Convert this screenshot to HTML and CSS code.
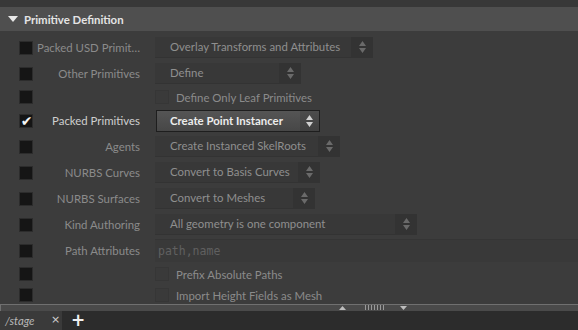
FILE: index.html
```html
<!DOCTYPE html>
<html>
<head>
<meta charset="utf-8">
<link rel="stylesheet" href="styles.css">
</head>
<body>
<div class="panel">
  <div class="topstrip"></div>
  <div class="header">
    <svg class="tri" width="10" height="6" viewBox="0 0 10 6"><path d="M0 0H10L5 6Z" fill="#e8e8e8"/></svg>
    <span class="htitle">Primitive Definition</span>
  </div>
  <div class="params">
    <div class="row">
      <span class="cb"></span><span class="label">Packed USD Primit…</span>
      <div class="menu w218"><span class="mtext">Overlay Transforms and Attributes</span><span class="arr"><svg width="7" height="12" viewBox="0 0 7 12"><path d="M3.5 0L7 5H0Z M0 7H7L3.5 12Z" fill="#6a6a6a"/></svg></span></div>
    </div>
    <div class="row">
      <span class="cb"></span><span class="label">Other Primitives</span>
      <div class="menu w146"><span class="mtext">Define</span><span class="arr"><svg width="7" height="12" viewBox="0 0 7 12"><path d="M3.5 0L7 5H0Z M0 7H7L3.5 12Z" fill="#6a6a6a"/></svg></span></div>
    </div>
    <div class="row toggle">
      <span class="cb"></span><span class="label"></span>
      <span class="tcb"></span><span class="ttext">Define Only Leaf Primitives</span>
    </div>
    <div class="row">
      <span class="cb"><span class="check">✔</span></span><span class="label on">Packed Primitives</span>
      <div class="menu active w164"><span class="mtext">Create Point Instancer</span><span class="arr"><svg width="7" height="12" viewBox="0 0 7 12"><path d="M3.5 0L7 5H0Z M0 7H7L3.5 12Z" fill="#d0d0d0"/></svg></span></div>
    </div>
    <div class="row">
      <span class="cb"></span><span class="label">Agents</span>
      <div class="menu w185"><span class="mtext">Create Instanced SkelRoots</span><span class="arr"><svg width="7" height="12" viewBox="0 0 7 12"><path d="M3.5 0L7 5H0Z M0 7H7L3.5 12Z" fill="#6a6a6a"/></svg></span></div>
    </div>
    <div class="row">
      <span class="cb"></span><span class="label">NURBS Curves</span>
      <div class="menu w165"><span class="mtext">Convert to Basis Curves</span><span class="arr"><svg width="7" height="12" viewBox="0 0 7 12"><path d="M3.5 0L7 5H0Z M0 7H7L3.5 12Z" fill="#6a6a6a"/></svg></span></div>
    </div>
    <div class="row">
      <span class="cb"></span><span class="label">NURBS Surfaces</span>
      <div class="menu w160"><span class="mtext">Convert to Meshes</span><span class="arr"><svg width="7" height="12" viewBox="0 0 7 12"><path d="M3.5 0L7 5H0Z M0 7H7L3.5 12Z" fill="#6a6a6a"/></svg></span></div>
    </div>
    <div class="row">
      <span class="cb"></span><span class="label">Kind Authoring</span>
      <div class="menu w262"><span class="mtext">All geometry is one component</span><span class="arr"><svg width="7" height="12" viewBox="0 0 7 12"><path d="M3.5 0L7 5H0Z M0 7H7L3.5 12Z" fill="#6a6a6a"/></svg></span></div>
    </div>
    <div class="row">
      <span class="cb"></span><span class="label">Path Attributes</span>
      <div class="field"><span class="ph">path,name</span></div>
    </div>
    <div class="row toggle">
      <span class="cb"></span><span class="label"></span>
      <span class="tcb"></span><span class="ttext">Prefix Absolute Paths</span>
    </div>
    <div class="row toggle">
      <span class="cb"></span><span class="label"></span>
      <span class="tcb"></span><span class="ttext">Import Height Fields as Mesh</span>
    </div>
  </div>
  <div class="splitter">
    <svg class="sp-up" width="7" height="4" viewBox="0 0 7 4"><path d="M3.5 0L7 4H0Z" fill="#bdbdbd"/></svg>
    <span class="grip"></span>
    <svg class="sp-down" width="7" height="4" viewBox="0 0 7 4"><path d="M0 0H7L3.5 4Z" fill="#bdbdbd"/></svg>
  </div>
  <div class="tabbar">
    <div class="tab"><span class="tabname">/stage</span><span class="tabx">×</span></div>
    <span class="plus">+</span>
  </div>
</div>
</body>
</html>
```

FILE: styles.css
```css
html, body {
  margin: 0;
  padding: 0;
  background: #3c3c3c;
}
.panel {
  width: 578px;
  height: 330px;
  display: flex;
  flex-direction: column;
  font-family: Lato, "Open Sans", sans-serif;
  font-size: 11.4px;
  overflow: hidden;
  background: #3c3c3c;
}
.topstrip {
  height: 7px;
  background: #383838;
  flex: none;
}
.header {
  height: 24px;
  flex: none;
  background: #4f4f4f;
  display: flex;
  align-items: center;
  padding-left: 8px;
}
.tri { margin-right: 5px; }
.htitle {
  color: #e4e4e4;
  font-weight: bold;
  font-size: 11.4px;
  margin-left: 1px;
}
.params {
  flex: 1;
  display: flex;
  flex-direction: column;
  gap: 5px;
  padding-top: 6px;
}
.row {
  height: 21px;
  display: flex;
  align-items: center;
  flex: none;
}
.row.toggle { height: 16px; }
.cb {
  width: 12px;
  height: 12px;
  margin-left: 19px;
  background: #151515;
  border: 1px solid #2c2c2c;
  position: relative;
  flex: none;
}
.check {
  position: absolute;
  left: 0;
  top: -1px;
  width: 13px;
  text-align: center;
  color: #f6f6f6;
  font-family: "DejaVu Sans", sans-serif;
  font-size: 14px;
  line-height: 14px;
}
.label {
  width: 107px;
  text-align: right;
  color: #8b8b8b;
  white-space: nowrap;
  flex: none;
}
.label.on { color: #cfcfcf; }
.menu {
  margin-left: 15px;
  height: 21px;
  box-sizing: border-box;
  display: flex;
  background: #383838;
  border-bottom: 1px solid #333;
  flex: none;
}
.menu .mtext {
  flex: 1;
  padding-left: 15px;
  line-height: 20px;
  color: #8f8f8f;
  white-space: nowrap;
}
.menu .arr {
  width: 22px;
  background: #333333;
  display: flex;
  align-items: center;
  justify-content: center;
}
.menu.active {
  background: linear-gradient(#555555, #474747);
  border: 1px solid #1e1e1e;
  height: 22px;
  margin-left: 16px;
}
.menu.active .mtext {
  color: #ececec;
  font-weight: bold;
  padding-left: 13px;
}
.menu.active .arr {
  background: linear-gradient(#4c4c4c, #404040);
  width: 19px;
}
.w218 { width: 218px; }
.w146 { width: 146px; }
.w164 { width: 164px; }
.w185 { width: 185px; }
.w165 { width: 165px; }
.w160 { width: 160px; }
.w262 { width: 262px; }
.field {
  margin-left: 15px;
  flex: 1;
  height: 23px;
  background: #393939;
  border-top: 1px solid #353535;
  box-sizing: border-box;
  display: flex;
  align-items: center;
}
.ph {
  font-family: "DejaVu Sans Mono", monospace;
  font-size: 11.5px;
  color: #606060;
  padding-left: 3px;
}
.tcb {
  width: 12px;
  height: 12px;
  margin-left: 15px;
  background: #3a3a3a;
  border: 1px solid #363636;
  flex: none;
}
.ttext {
  margin-left: 7px;
  color: #8b8b8b;
  white-space: nowrap;
}
.splitter {
  height: 6px;
  flex: none;
  background: #4a4a4a;
  border-top: 1px solid #707070;
  border-left: 1px solid #707070;
  position: relative;
}
.sp-up { position: absolute; left: 338px; top: 1px; }
.sp-down { position: absolute; left: 399px; top: 1px; }
.grip {
  position: absolute;
  left: 363px;
  top: 0px;
  width: 20px;
  height: 5px;
  background-image: radial-gradient(circle, #9a9a9a 0.6px, transparent 0.9px);
  background-size: 3px 2px;
}
.tabbar {
  height: 19px;
  flex: none;
  background: #2c2c2c;
  display: flex;
  align-items: center;
}
.tab {
  width: 62px;
  height: 19px;
  background: #3a3a3a;
  display: flex;
  align-items: center;
  position: relative;
}
.tabname {
  font-style: italic;
  color: #b8b8b8;
  margin-left: 5px;
  font-size: 11.4px;
}
.tabx {
  position: absolute;
  left: 51px;
  top: 2px;
  color: #cfcfcf;
  font-size: 11px;
  font-family: "DejaVu Sans", sans-serif;
}
.plus {
  margin-left: 9px;
  color: #f0f0f0;
  font-weight: bold;
  font-size: 17px;
  font-family: "DejaVu Sans", sans-serif;
  line-height: 19px;
}
```
